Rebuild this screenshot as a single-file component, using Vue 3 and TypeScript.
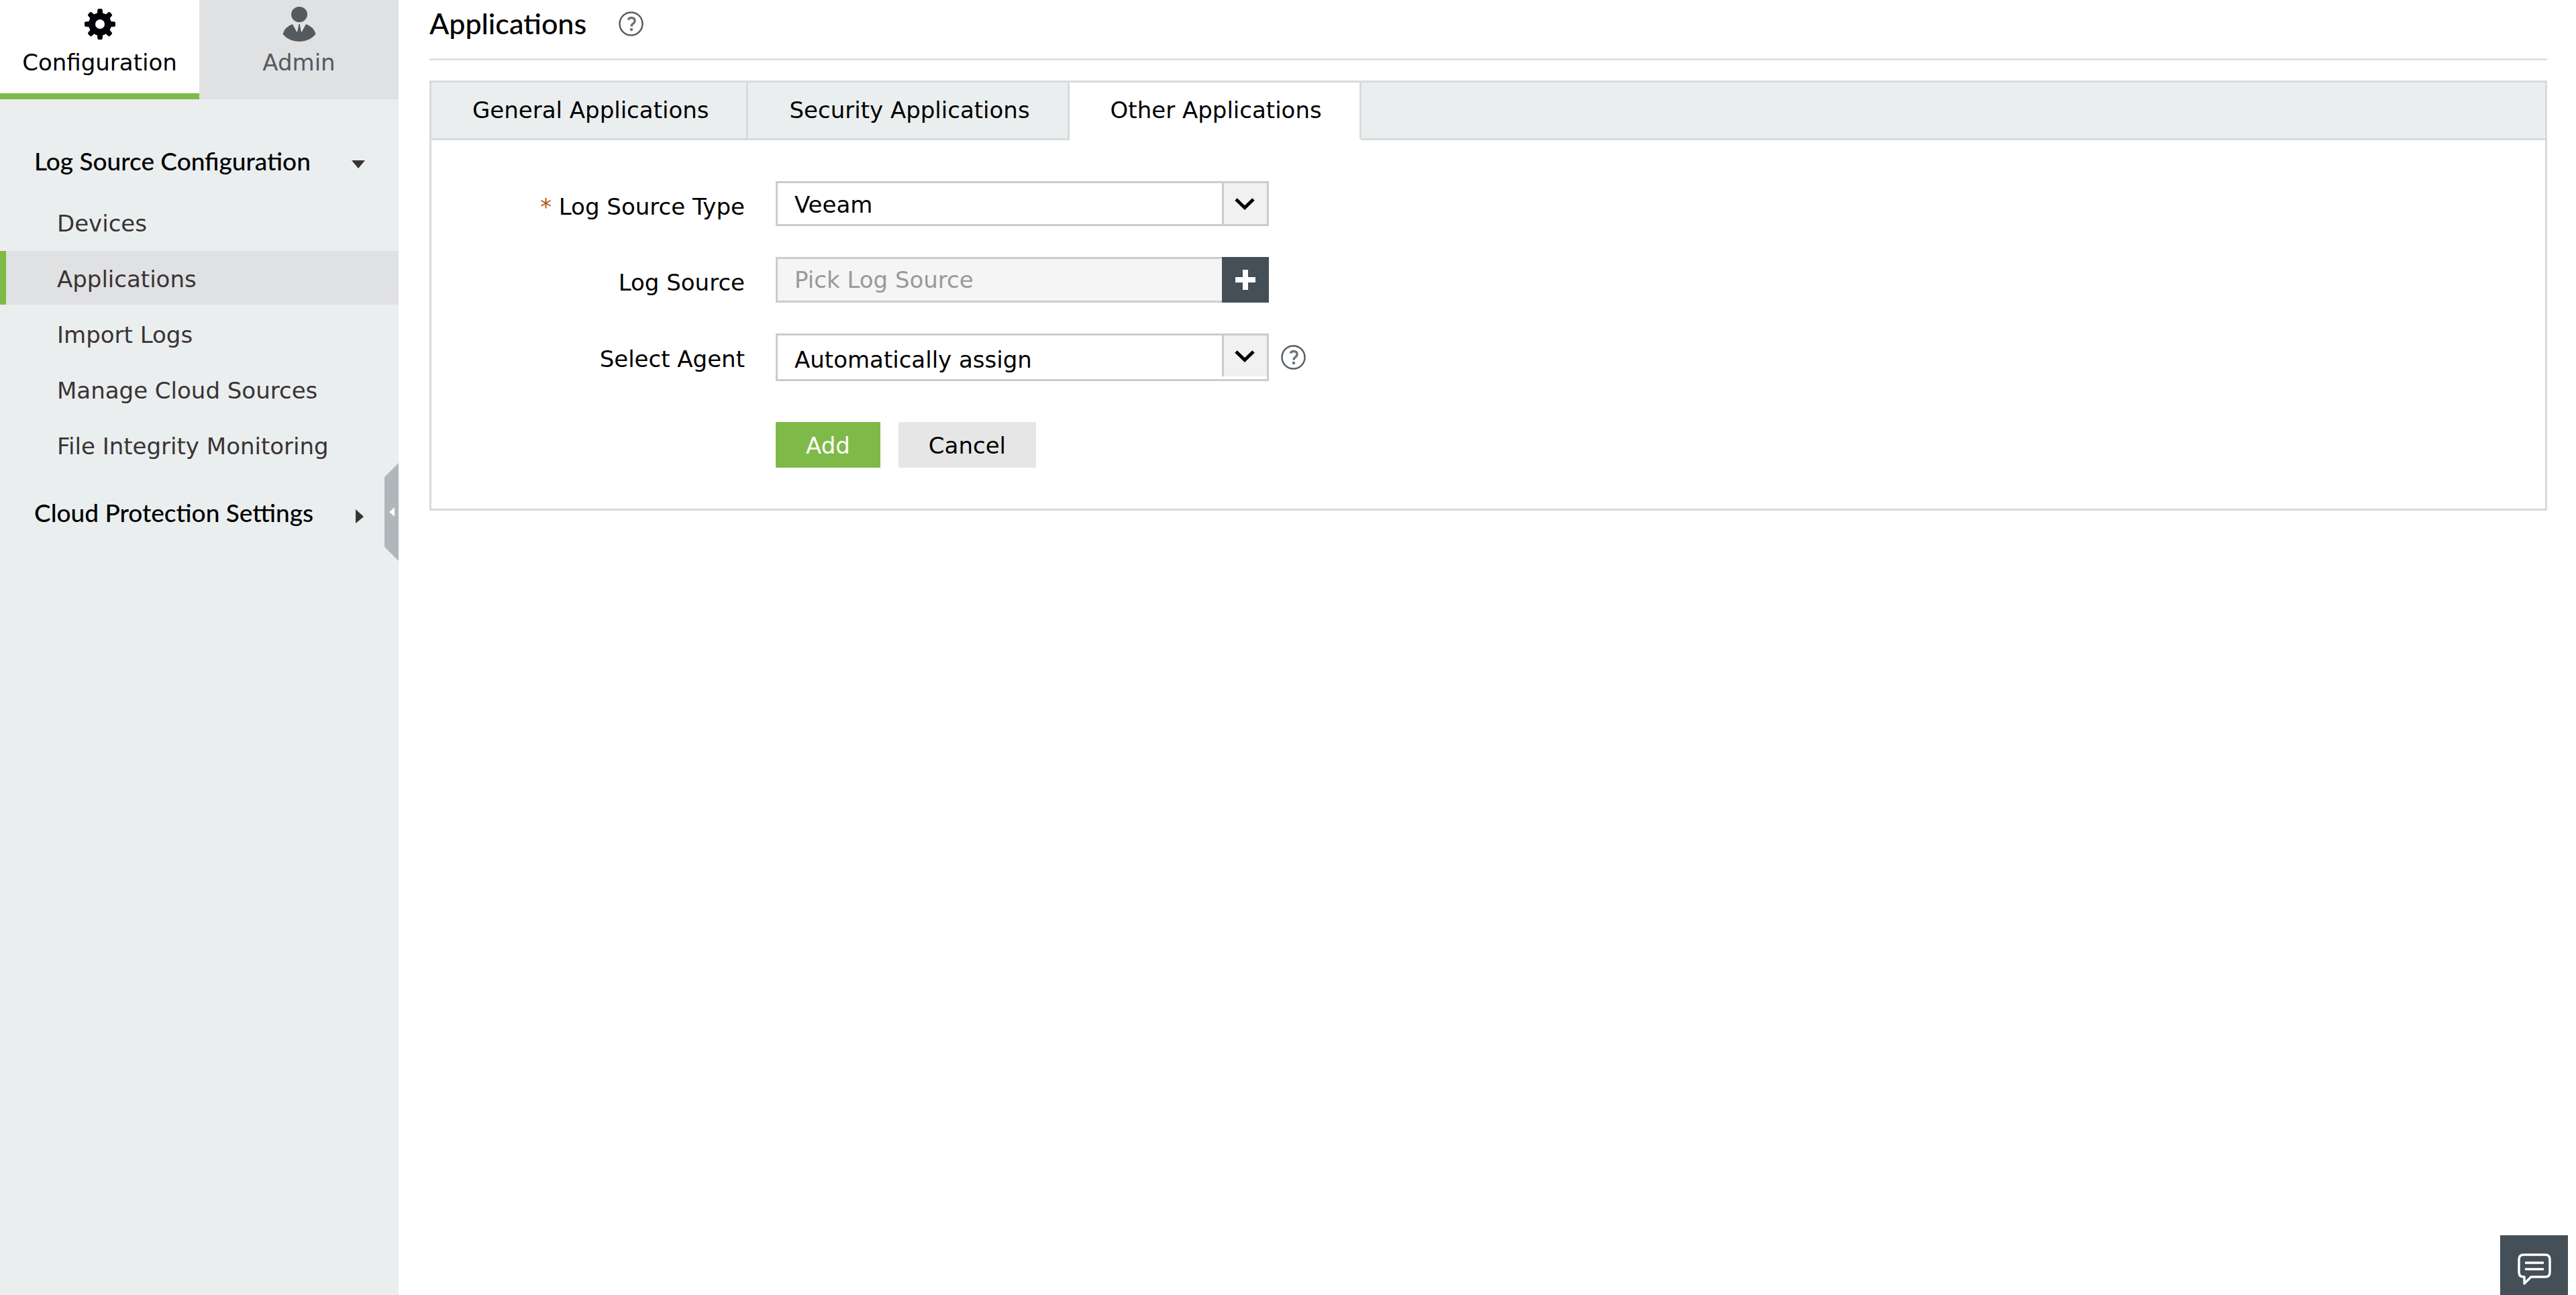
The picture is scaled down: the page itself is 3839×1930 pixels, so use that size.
<script setup lang="ts">
import { ref } from 'vue'

const menu: string[] = [
  'Devices',
  'Applications',
  'Import Logs',
  'Manage Cloud Sources',
  'File Integrity Monitoring',
]
const tabs: string[] = ['General Applications', 'Security Applications', 'Other Applications']

const activeItem = ref('Applications')
const activeTab = ref('Other Applications')
const sourceType = ref('Veeam')
const logSource = ref('')
const agent = ref('Automatically assign')
const teeth: number[] = [0, 45, 90, 135, 180, 225, 270, 315]
</script>

<template>
  <div class="page">
    <aside class="sidebar">
      <nav class="modes">
        <a href="#" class="mode mode-on">
          <svg class="mode-icon" viewBox="0 0 52 52" aria-hidden="true">
            <g fill="#05030a">
              <path
                fill-rule="evenodd"
                d="M26 9a17 17 0 1 0 0 34a17 17 0 1 0 0-34zM26 19a7 7 0 1 1 0 14a7 7 0 1 1 0-14z"
              />
              <path
                v-for="a in teeth"
                :key="a"
                d="M21.500 13L22.300 5Q22.500 3 24 3H28Q29.500 3 29.700 5L30.500 13z"
                :transform="`rotate(${a} 26 26)`"
              />
            </g>
          </svg>
          <span>Configuration</span>
        </a>
        <a href="#" class="mode">
          <svg class="mode-icon" viewBox="0 0 52 52" aria-hidden="true">
            <g fill="#555a5f">
              <ellipse cx="26" cy="11.500" rx="12" ry="11.500" />
              <path d="M16 26L22.500 38L25 31L26 25L27 31L29.500 38L36 26Q48 30 50.500 41Q41 52 26 52Q11 52 1.500 41Q4 30 16 26z" />
              <path d="M25 26h2l1.500 11l-2.500 3l-2.500-3z" />
            </g>
            <path d="M17 25.500L22.800 38L25.200 26zM35 25.500L29.200 38L26.800 26z" fill="#e0e1e3" />
          </svg>
          <span>Admin</span>
        </a>
      </nav>

      <nav class="sections">
        <button type="button" class="section-head">
          <span>Log Source Configuration</span>
          <svg class="caret" viewBox="0 0 22 22" aria-hidden="true"><path d="M1 5H21L11 17z" fill="#3a3334" /></svg>
        </button>
        <ul class="menu">
          <li v-for="item in menu" :key="item">
            <a
              href="#"
              class="menu-link"
              :class="{ 'menu-on': item === activeItem }"
              @click.prevent="activeItem = item"
              >{{ item }}</a
            >
          </li>
        </ul>
        <button type="button" class="section-head">
          <span>Cloud Protection Settings</span>
          <svg class="caret" viewBox="0 0 22 22" aria-hidden="true"><path d="M7 1V22L19 12z" fill="#3a3334" /></svg>
        </button>
      </nav>

      <button type="button" class="collapse" aria-label="Collapse sidebar">
        <svg viewBox="0 0 21 146" width="21" height="146" aria-hidden="true">
          <path d="M21 0V146L0 125V21z" fill="#b0b7ba" />
          <path d="M15 66V80L7 73z" fill="#fff" />
        </svg>
      </button>
    </aside>

    <main class="main">
      <header class="title-row">
        <h1>Applications</h1>
        <button type="button" class="help" aria-label="Help">
          <svg viewBox="0 0 37 37" width="37" height="37" aria-hidden="true">
            <circle cx="18.500" cy="18.500" r="17" fill="none" stroke="#566066" stroke-width="2.500" />
            <path d="M14 12.500Q15.500 9.500 19 9.500Q24 9.500 24 14Q24 16.500 21.500 18.200Q19 19.800 19 22.500" fill="none" stroke="#6e7579" stroke-width="3.400" />
            <circle cx="19" cy="27" r="2.300" fill="#6e7579" />
          </svg>
        </button>
      </header>

      <section class="panel">
        <div class="tabs" role="tablist">
          <button
            v-for="tab in tabs"
            :key="tab"
            type="button"
            role="tab"
            class="tab"
            :class="{ 'tab-on': tab === activeTab }"
            :aria-selected="tab === activeTab"
            @click="activeTab = tab"
          >
            {{ tab }}
          </button>
          <div class="tab-rest"></div>
        </div>

        <form class="form" @submit.prevent>
          <div class="row">
            <label for="source-type"><span class="star">*</span> Log Source Type</label>
            <div class="control">
              <div class="select-box">
                <select id="source-type" v-model="sourceType">
                  <option>Veeam</option>
                </select>
                <span class="arrow">
                  <svg viewBox="0 0 32 20" width="32" height="20" aria-hidden="true">
                    <path d="M2 3L15 15.500L28 3" fill="none" stroke="#05030a" stroke-width="5" />
                  </svg>
                </span>
              </div>
            </div>
          </div>

          <div class="row">
            <label for="log-source">Log Source</label>
            <div class="control">
              <div class="picker">
                <input id="log-source" v-model="logSource" type="text" placeholder="Pick Log Source" readonly />
                <button type="button" class="plus" aria-label="Pick log source">
                  <svg viewBox="0 0 32 32" width="32" height="32" aria-hidden="true">
                    <path d="M16 1V31M1 16H31" stroke="#fff" stroke-width="8" />
                  </svg>
                </button>
              </div>
            </div>
          </div>

          <div class="row">
            <label for="agent">Select Agent</label>
            <div class="control">
              <div class="select-box select-tall">
                <select id="agent" v-model="agent">
                  <option>Automatically assign</option>
                </select>
                <span class="arrow">
                  <svg viewBox="0 0 32 20" width="32" height="20" aria-hidden="true">
                    <path d="M2 3L15 15.500L28 3" fill="none" stroke="#05030a" stroke-width="5" />
                  </svg>
                </span>
              </div>
              <button type="button" class="help" aria-label="Agent help">
                <svg viewBox="0 0 37 37" width="37" height="37" aria-hidden="true">
                  <circle cx="18.500" cy="18.500" r="17" fill="none" stroke="#566066" stroke-width="2.500" />
                  <path d="M14 12.500Q15.500 9.500 19 9.500Q24 9.500 24 14Q24 16.500 21.500 18.200Q19 19.800 19 22.500" fill="none" stroke="#6e7579" stroke-width="3.400" />
                  <circle cx="19" cy="27" r="2.300" fill="#6e7579" />
                </svg>
              </button>
            </div>
          </div>

          <div class="actions">
            <button type="submit" class="btn btn-add">Add</button>
            <button type="button" class="btn">Cancel</button>
          </div>
        </form>
      </section>
    </main>

    <button type="button" class="chat" aria-label="Feedback">
      <svg viewBox="0 0 50 48" width="50" height="48" aria-hidden="true">
        <path
          d="M9 2H41Q48 2 48 9V28Q48 35 41 35H20L10 45V35H9Q2 35 2 28V9Q2 2 9 2z"
          fill="none"
          stroke="#fff"
          stroke-width="3.500"
          stroke-linejoin="round"
        />
        <path d="M11 14H39M11 23.500H39" stroke="#fff" stroke-width="3.500" />
      </svg>
    </button>
  </div>
</template>

<style>
body {
  margin: 0;
  background: #fff;
}
</style>

<style scoped>
.page {
  display: flex;
  min-height: 100vh;
  font-family: Verdana, 'DejaVu Sans', sans-serif;
  font-size: 34px;
  line-height: 40px;
  color: #000;
}
button,
input,
select {
  font: inherit;
  color: inherit;
  margin: 0;
  border: 0;
  border-radius: 0;
  padding: 0;
  background: none;
  box-sizing: border-box;
}
svg {
  display: block;
}
a {
  color: inherit;
  text-decoration: none;
}

.sidebar {
  position: relative;
  flex: none;
  width: 594px;
  background: #eaeeef;
}
.modes {
  display: flex;
  height: 148px;
}
.mode {
  flex: 1;
  display: flex;
  flex-direction: column;
  align-items: center;
  gap: 11px;
  padding-top: 10px;
  background: #e0e1e3;
  color: #555a5f;
}
.mode-on {
  background: #fff;
  color: #000;
  border-bottom: 9px solid #7fba48;
}
.mode-icon {
  width: 52px;
  height: 52px;
}
.sections {
  padding-top: 68px;
}
.section-head {
  display: flex;
  align-items: center;
  justify-content: space-between;
  width: 100%;
  padding: 0 49px 0 51px;
  font-family: Lato, Carlito, sans-serif;
  font-size: 37px;
  font-weight: 500;
  line-height: 48px;
  text-align: left;
}
.caret {
  width: 22px;
  height: 22px;
  margin-top: 10px;
}
.menu {
  display: flex;
  flex-direction: column;
  gap: 3px;
  margin: 27px 0 37px;
  padding: 0;
  list-style: none;
}
.menu-link {
  display: block;
  padding: 4px 0 0 76px;
  border-left: 9px solid transparent;
  line-height: 76px;
  color: #3a3334;
}
.menu-on {
  background: #e0e1e3;
  border-left-color: #7fba48;
}
.collapse {
  position: absolute;
  top: 690px;
  right: 0;
}

.main {
  flex: 1;
  min-width: 0;
  padding: 0 43px 61px 46px;
}
.title-row {
  display: flex;
  align-items: center;
  gap: 48px;
  padding: 10px 0 27px;
  border-bottom: 3px solid #e1e1e1;
}
h1 {
  margin: 0;
  font-family: Lato, Carlito, sans-serif;
  font-size: 43px;
  font-weight: 500;
  line-height: 50px;
}
.panel {
  margin-top: 30px;
  border: 3px solid #d6dbdd;
}
.tabs {
  display: flex;
  height: 86px;
}
.tab {
  padding: 0 56px 2px 61px;
  border-right: 3px solid #d6dbdd;
  border-bottom: 3px solid #d6dbdd;
  background: #eaeeef;
}
.tab-on {
  background: #fff;
  border-bottom-color: #fff;
}
.tab-rest {
  flex: 1;
  border-bottom: 3px solid #d6dbdd;
  background: #eaeeef;
}
.form {
  display: flex;
  flex-direction: column;
  gap: 46px;
  padding: 61px 0;
}
.row {
  display: flex;
  align-items: flex-start;
  gap: 46px;
}
.row label {
  width: 467px;
  padding-top: 18px;
  margin-bottom: -18px;
  text-align: right;
}
.star {
  color: #b3561c;
}
.control {
  display: flex;
  align-items: flex-start;
  gap: 18px;
}
.control > .help {
  margin-top: 17px;
}
.select-box {
  position: relative;
  width: 735px;
  height: 67px;
  box-sizing: border-box;
  border: 3px solid #ccc;
}
.select-tall {
  height: 71px;
}
.select-box select {
  display: block;
  width: 100%;
  height: 100%;
  padding: 3px 70px 0 25px;
  appearance: none;
}
.select-tall select {
  padding-top: 6px;
}
.arrow {
  position: absolute;
  top: 0;
  right: 0;
  display: flex;
  align-items: center;
  justify-content: center;
  width: 64px;
  height: 61px;
  border-left: 3px solid #ccc;
  background: #f1f1f1;
  pointer-events: none;
}
.picker {
  display: flex;
  width: 735px;
  height: 68px;
}
.picker input {
  flex: 1;
  min-width: 0;
  padding: 0 25px;
  border: 3px solid #ccc;
  border-right: 0;
  background: #f5f5f5;
}
.picker input::placeholder {
  color: #999;
  opacity: 1;
}
.plus {
  display: flex;
  align-items: center;
  justify-content: center;
  width: 70px;
  background: #444f57;
}
.actions {
  display: flex;
  gap: 27px;
  margin: 15px 0 0 513px;
}
.btn {
  height: 68px;
  padding: 2px 45px 0;
  background: #e6e6e6;
}
.btn-add {
  background: #7fba48;
  color: #fff;
}
.chat {
  position: fixed;
  right: 12px;
  bottom: 0;
  display: flex;
  align-items: flex-start;
  justify-content: center;
  width: 101px;
  height: 89px;
  padding-top: 27px;
  background: #444f57;
}
</style>
